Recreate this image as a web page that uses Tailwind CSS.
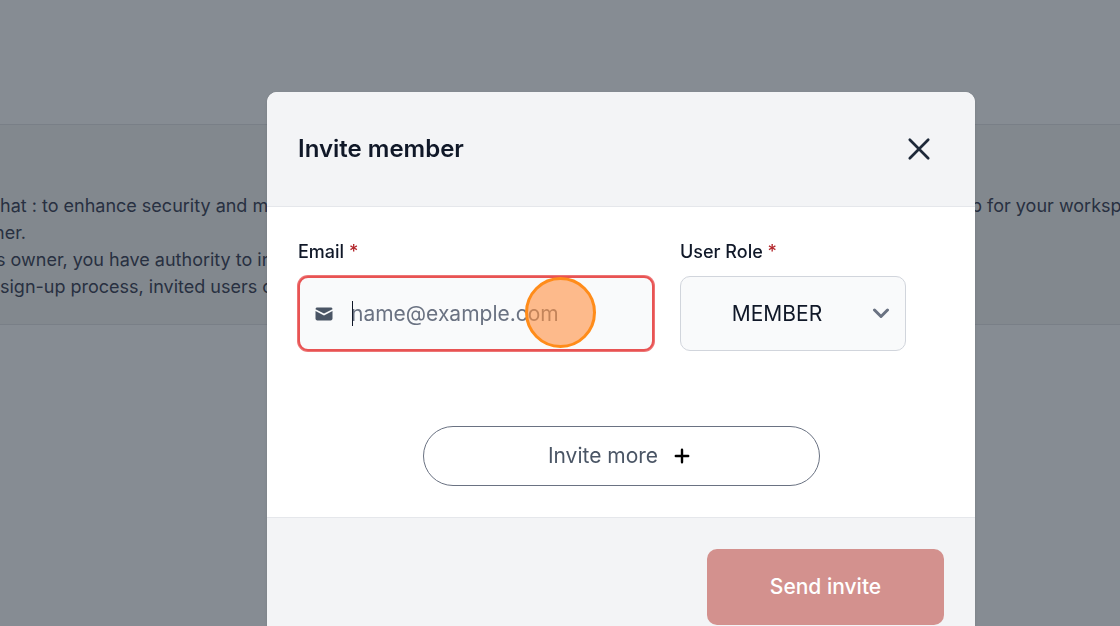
<!DOCTYPE html>
<html lang="en">
<head>
  <meta charset="UTF-8" />
  <title>Invite member</title>
  <meta name="viewport" content="width=device-width, initial-scale=1.0" />
  <script src="https://cdn.jsdelivr.net/npm/@tailwindcss/browser@4"></script>
</head>
<body class="h-screen overflow-hidden bg-[#868c93] font-['Inter',sans-serif] text-gray-900">

  <!-- page behind the modal -->
  <main class="pt-[124px]">
    <section class="flex justify-between border-y border-[#797f87] bg-[#82888e] pt-[67px] pb-6 text-lg leading-[27px] whitespace-nowrap text-[#283041]">
      <div>
        <p>hat : to enhance security and man</p>
        <p class="-indent-1.5">ner.</p>
        <p class="-indent-1">s owner, you have authority to inv</p>
        <p>sign-up process, invited users ca</p>
      </div>
      <p class="w-[149px]">p for your worksp</p>
    </section>
  </main>

  <!-- modal -->
  <div class="fixed inset-0 flex items-start justify-center overflow-hidden pt-[92px] pl-[122px]">
    <form role="dialog" aria-labelledby="modal-title" class="w-full max-w-[708px] rounded-[10px] bg-white shadow">
      <div class="flex items-center justify-between rounded-t-[10px] border-b border-gray-200 bg-gray-100 py-9 pr-[35px] pl-[31px]">
        <h3 id="modal-title" class="text-2xl leading-[42px] font-semibold">Invite member</h3>
        <button type="button" aria-label="Close" class="p-2 text-gray-800">
          <svg class="size-[26px]" viewBox="0 0 26 26" fill="none" stroke="currentColor" stroke-width="2.7" stroke-linecap="round">
            <path d="M3.8 3.8l18.4 18.4M22.2 3.8l-18.4 18.4" />
          </svg>
        </button>
      </div>

      <div class="px-[31px] py-[31px]">
        <div class="flex gap-[26px]">
          <div class="w-[356px]">
            <label for="email" class="mb-2.5 block text-lg leading-7 font-medium">Email <span class="text-[#b3262b]">*</span></label>
            <div class="relative">
              <svg class="absolute top-[31px] left-[17px] h-[14px] w-[18px] text-gray-600" viewBox="0 0 18 14" fill="currentColor">
                <path d="M0.5 2.2C0.5 1.1 1.2 0.5 2.3 0.5H15.7C16.8 0.5 17.5 1.1 17.5 2.2L9 6.6Z" />
                <path d="M0.5 4.1L9 8.6L17.5 4.1V11.5C17.5 12.6 16.8 13.4 15.7 13.4H2.3C1.2 13.4 0.5 12.6 0.5 11.5Z" />
              </svg>
              <input id="email" type="email" placeholder="name@example.com" class="block h-[75px] w-full rounded-[10px] border-2 border-[#e85353] bg-gray-50 pr-4 pl-[51px] text-[21px] ring-1 ring-[#e85353]/80 outline-none placeholder:text-gray-500" />
              <span class="absolute top-[25px] left-[54px] h-[25px] w-px bg-gray-900"></span>
              <!-- click marker -->
              <span class="absolute top-px left-[227px] size-[71px] rounded-full border-[3px] border-[#ff8c1a] bg-[#ff9040]/60"></span>
            </div>
          </div>
          <div class="w-[226px]">
            <label for="role" class="mb-2.5 block text-lg leading-7 font-medium">User Role <span class="text-[#b3262b]">*</span></label>
            <div class="relative">
              <select id="role" class="block h-[75px] w-full appearance-none rounded-[10px] border border-gray-300 bg-gray-50 pr-8 text-center text-[21px]">
                <option>MEMBER</option>
              </select>
              <svg class="pointer-events-none absolute top-8 right-4 h-[11px] w-[18px] text-gray-500" viewBox="0 0 18 11" fill="none" stroke="currentColor" stroke-width="3" stroke-linecap="round" stroke-linejoin="round">
                <path d="M2.5 2L9 8.5L15.5 2" />
              </svg>
            </div>
          </div>
        </div>

        <button type="button" class="mx-auto mt-[75px] flex h-[60px] w-[397px] items-center justify-center gap-4 rounded-full border border-gray-500 pr-1 text-[21px] text-gray-600">
          Invite more
          <svg class="size-4 text-black" viewBox="0 0 16 16" fill="none" stroke="currentColor" stroke-width="2.4" stroke-linecap="round">
            <path d="M8 1.8V14.2M1.8 8H14.2" />
          </svg>
        </button>
      </div>

      <div class="flex justify-end rounded-b-[10px] border-t border-gray-200 bg-gray-100 p-[31px]">
        <button type="submit" class="h-[76px] w-[237px] rounded-[10px] bg-[#d3918e] text-[21px] font-medium text-white">Send invite</button>
      </div>
    </form>
  </div>
</body>
</html>
